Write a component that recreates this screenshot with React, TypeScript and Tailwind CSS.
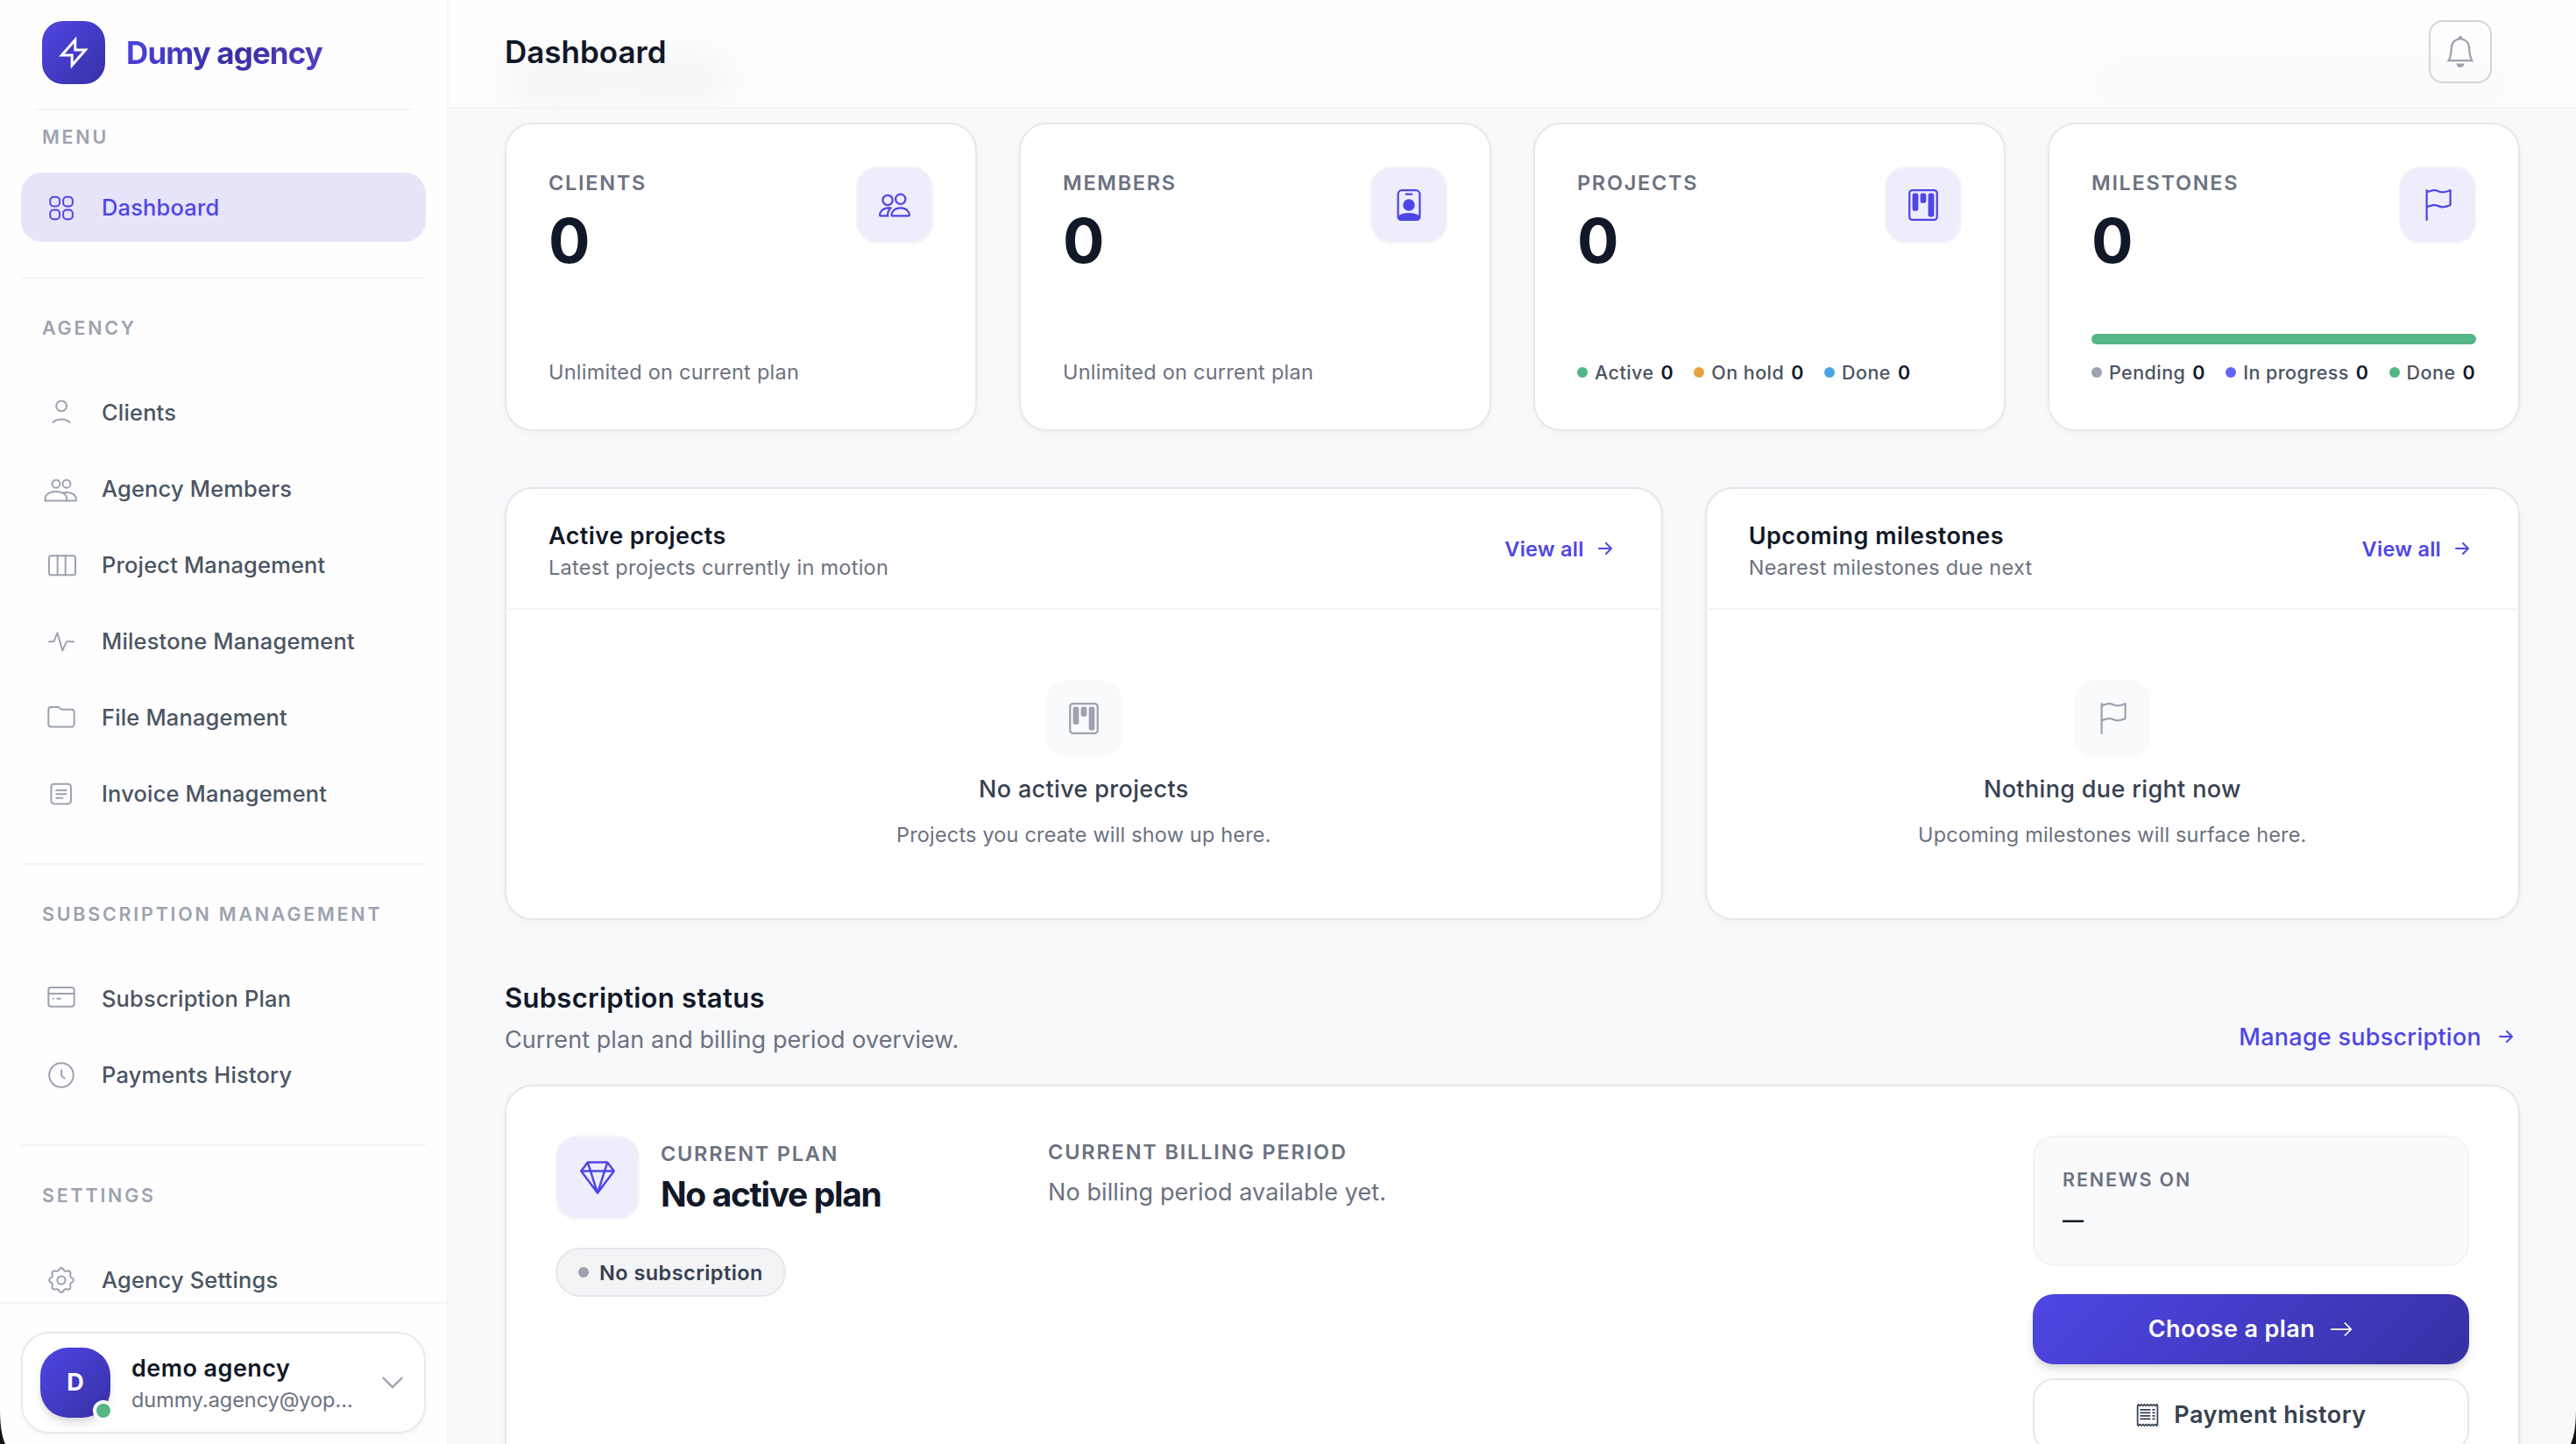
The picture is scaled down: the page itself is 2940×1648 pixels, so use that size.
import type { ReactNode } from 'react'
import type { IconType } from 'react-icons'
import {
  BsArrowRight,
  BsArrowRightShort,
  BsBell,
  BsChevronDown,
  BsFlag,
  BsGem,
  BsKanban,
  BsPeople,
  BsPersonBadge,
  BsReceipt,
} from 'react-icons/bs'

// eight-lobed outline, centred on 20,20
const gearPoints = Array.from({ length: 96 }, (_, i) => {
  const a = (i / 96) * Math.PI * 2
  const r = 12.5 + 1.4 * Math.cos(a * 8)
  return `${(20 + r * Math.cos(a)).toFixed(2)},${(20 + r * Math.sin(a)).toFixed(2)}`
}).join(' ')

const icons: Record<string, ReactNode> = {
  grid: (
    <>
      <rect x="7.3" y="7.7" width="10.8" height="10.8" rx="4" />
      <rect x="22.1" y="7.7" width="10.8" height="10.8" rx="4" />
      <rect x="7.3" y="22.5" width="10.8" height="10.8" rx="4" />
      <rect x="22.1" y="22.5" width="10.8" height="10.8" rx="4" />
    </>
  ),
  user: (
    <>
      <circle cx="20.1" cy="12.4" r="5.9" />
      <path d="M10.4 30.9c5.6-4.7 13.6-4.7 19.2 0" />
    </>
  ),
  users: (
    <>
      <circle cx="14" cy="14.2" r="4.5" />
      <circle cx="26" cy="14.2" r="4.5" />
      <path d="M1.6 33.6V31c0-5 5.8-8 12.3-8s12.3 3 12.3 8v2.6z" />
      <path d="M22.8 24h3.4c6 0 10.6 3 10.6 7.4v2.2H26" />
    </>
  ),
  columns: (
    <>
      <rect x="6" y="9.3" width="30" height="22" rx="2.4" />
      <path d="M15.7 9.3v22M24.7 9.3v22" />
    </>
  ),
  pulse: <path d="M6 20.3h5.3l4.1-10 5.9 20.2 4.6-10.2H34" />,
  folder: (
    <path d="M5.3 11a3 3 0 0 1 3-3h7.6c.8 0 1.5.3 2.1.8l1.3 1.1c.6.5 1.3.8 2.1.8h10.3a3 3 0 0 1 3 3v13.8a3 3 0 0 1-3 3H8.3a3 3 0 0 1-3-3z" />
  ),
  invoice: (
    <>
      <rect x="8.4" y="8.8" width="22.6" height="22.6" rx="3.4" />
      <path d="M14.3 15.9h11.4M14.3 20.3h11.4M14.3 24.8h7" />
    </>
  ),
  card: (
    <>
      <rect x="5.3" y="7" width="29.4" height="21.8" rx="3" />
      <path d="M5.3 13.9h29.4M10.8 19.8h.2M15.3 19.8h3.6" />
    </>
  ),
  clock: (
    <>
      <circle cx="20" cy="20" r="13.8" />
      <path d="M20 14.3v4.9c0 2 1.4 3.2 3.6 4.4" />
    </>
  ),
  gear: (
    <>
      <polygon points={gearPoints} />
      <circle cx="20" cy="20" r="4.6" />
    </>
  ),
}

const sections = [
  { title: 'MENU', items: [{ label: 'Dashboard', icon: 'grid', active: true }] },
  {
    title: 'AGENCY',
    items: [
      { label: 'Clients', icon: 'user' },
      { label: 'Agency Members', icon: 'users' },
      { label: 'Project Management', icon: 'columns' },
      { label: 'Milestone Management', icon: 'pulse' },
      { label: 'File Management', icon: 'folder' },
      { label: 'Invoice Management', icon: 'invoice' },
    ],
  },
  {
    title: 'SUBSCRIPTION MANAGEMENT',
    items: [
      { label: 'Subscription Plan', icon: 'card' },
      { label: 'Payments History', icon: 'clock' },
    ],
  },
  { title: 'SETTINGS', items: [{ label: 'Agency Settings', icon: 'gear' }] },
]

function NavItem({ label, icon, active }: { label: string; icon: string; active?: boolean }) {
  return (
    <a
      href="#"
      className={`flex h-[79px] shrink-0 items-center gap-[26px] rounded-3xl pl-[26px] text-[25.5px] font-medium tracking-[0.15px] ${
        active ? 'bg-[#e6e4f9] text-[#4f46e5]' : 'text-[#4b5563]'
      }`}
    >
      <svg
        viewBox="0 0 40 40"
        fill="none"
        stroke="currentColor"
        strokeWidth="2"
        strokeLinecap="round"
        strokeLinejoin="round"
        className={`h-10 w-10 ${active ? 'text-[#4f46e5]' : 'text-[#9ca3af]'}`}
      >
        {icons[icon]}
      </svg>
      <span className="pt-0.5">{label}</span>
    </a>
  )
}

function Sidebar() {
  return (
    <aside className="flex h-full w-[512px] shrink-0 flex-col border-r-2 border-[#f3f4f6] bg-[#fefefe]">
      <div className="mx-10 flex h-[126px] shrink-0 items-center gap-6 border-b-2 border-[#f3f4f6] pb-1 pl-2">
        <div className="h-[72px] w-[72px] rounded-3xl bg-[linear-gradient(135deg,#4f46e5,#3730a3)]">
          <svg viewBox="0 0 72 72" fill="none" stroke="white" strokeWidth="3" className="h-[72px] w-[72px]">
            <path d="M37.8 21.6v11.3h11.7L34.2 50.4V39.1H22.5z" />
          </svg>
        </div>
        <span className="bg-[linear-gradient(135deg,#4f46e5,#3730a3_55%,#5b3ec2)] bg-clip-text text-[35px] leading-[48px] font-bold tracking-[-0.9px] text-transparent">
          Dumy agency
        </span>
      </div>

      <nav className="flex min-h-0 flex-1 flex-col overflow-hidden px-6">
        {sections.map((s, i) => (
          <div
            key={s.title}
            className={
              i === 0
                ? 'flex shrink-0 flex-col pt-3'
                : 'mt-10 flex shrink-0 flex-col border-t-2 border-[#f3f4f6] pt-[38px]'
            }
          >
            <div
              className={`pl-6 text-[21.5px] leading-9 font-semibold tracking-[2.75px] text-[#9ca3af] ${
                i === 0 ? 'mb-[23px]' : 'mb-[39px]'
              }`}
            >
              {s.title}
            </div>
            <div className="flex flex-col gap-2">
              {s.items.map((item) => (
                <NavItem key={item.label} {...item} />
              ))}
            </div>
          </div>
        ))}
      </nav>

      <div className="h-[162px] shrink-0 border-t-2 border-[#f3f4f6] px-6 pt-8">
        <div className="flex h-[116px] items-center gap-6 rounded-[32px] border-2 border-[#e9eaee] bg-white pr-[22px] pl-5 shadow-[0_2px_6px_rgba(0,0,0,0.04)]">
          <div className="relative flex h-20 w-20 items-center justify-center rounded-[32px] bg-[linear-gradient(135deg,#4f46e5,#3730a3)] text-[27px] font-bold text-white shadow-[0_8px_12px_-2px_rgba(0,0,0,0.12),0_4px_8px_-4px_rgba(0,0,0,0.1)]">
            D
            <span className="absolute -right-1 -bottom-1 h-6 w-6 rounded-full border-4 border-white bg-[#54b586]" />
          </div>
          <div className="min-w-0 flex-1 pt-0.5">
            <div className="text-[27px] leading-[38px] font-semibold tracking-[0.45px] text-[#111827]">demo agency</div>
            <div className="text-[23.5px] leading-[34px] tracking-[-0.06px] text-[#6b7280]">dummy.agency@yop…</div>
          </div>
          <BsChevronDown size={28} strokeWidth={0.5} className="text-[#9ca3af]" />
        </div>
      </div>
    </aside>
  )
}

function Header() {
  return (
    <header className="relative flex h-[124px] shrink-0 items-center justify-between overflow-hidden border-b-2 border-[#f3f4f6] bg-[#fefefe] pr-24 pb-1 pl-16">
      <div className="absolute top-[72px] left-[66px] h-10 w-[120px] rounded-full bg-black/5 blur-[24px]" />
      <div className="absolute top-[70px] left-[190px] h-10 w-[130px] rounded-full bg-black/5 blur-[24px]" />
      <div className="absolute top-[76px] right-20 h-10 w-[470px] rounded-full bg-black/2 blur-[22px]" />
      <h1 className="relative text-[35px] leading-[48px] font-semibold text-[#111827]">Dashboard</h1>
      <button
        type="button"
        aria-label="Notifications"
        className="relative flex h-[72px] w-[72px] items-center justify-center rounded-2xl border-2 border-[#d1d5db] text-[#9ca3af]"
      >
        <BsBell size={36} />
      </button>
    </header>
  )
}

function StatCard({ label, icon: Icon, children }: { label: string; icon: IconType; children: ReactNode }) {
  return (
    <div className="flex h-[352px] flex-col justify-between rounded-[32px] border-2 border-[#e7e8ec] bg-white p-12 shadow-[0_2px_6px_rgba(0,0,0,0.04)]">
      <div className="flex items-start justify-between">
        <div>
          <div className="text-[23.5px] leading-[37px] font-semibold tracking-[1.7px] text-[#6b7280]">{label}</div>
          <div className="mt-3 text-[70.5px] leading-[72px] font-bold text-[#111827]">0</div>
        </div>
        <div className="flex h-[88px] w-[88px] items-center justify-center rounded-3xl border-2 border-[#f3f4f6] bg-[#eeedfb] text-[#4f46e5]">
          <Icon size={36} />
        </div>
      </div>
      <div>{children}</div>
    </div>
  )
}

function Legend({ items }: { items: { label: string; dot: string }[] }) {
  return (
    <div className="flex gap-6 text-[21.5px] leading-[34px] whitespace-nowrap">
      {items.map((it) => (
        <div key={it.label} className="flex items-center gap-2">
          <span className={`h-3 w-3 rounded-full ${it.dot}`} />
          <span className="font-medium tracking-[0.45px] text-[#4b5563]">{it.label}</span>
          <span className="font-semibold tracking-[-0.4px] text-[#111827]">0</span>
        </div>
      ))}
    </div>
  )
}

function Panel({
  title,
  subtitle,
  icon: Icon,
  emptyTitle,
  emptyText,
  className,
}: {
  title: string
  subtitle: string
  icon: IconType
  emptyTitle: string
  emptyText: string
  className: string
}) {
  return (
    <section
      className={`h-[494px] rounded-[32px] border-2 border-[#e7e8ec] bg-white shadow-[0_2px_6px_rgba(0,0,0,0.04)] ${className}`}
    >
      <div className="flex h-[138px] items-center justify-between border-b-2 border-[#f3f4f6] px-12">
        <div className="pt-1.5">
          <h2 className="text-[27px] leading-[38px] font-semibold tracking-[0.45px] text-[#111827]">{title}</h2>
          <p className="-mt-px text-[23.5px] leading-9 tracking-[0.27px] text-[#6b7280]">{subtitle}</p>
        </div>
        <a href="#" className="flex items-center gap-2 text-[23.5px] font-semibold tracking-[0.27px] text-[#4f46e5]">
          <span className="pt-0.5">View all</span>
          <BsArrowRightShort size={32} />
        </a>
      </div>
      <div className="flex flex-col items-center pt-20">
        <div className="flex h-[88px] w-[88px] items-center justify-center rounded-3xl bg-[#f9fafb] text-[#9ca3af]">
          <Icon size={36} />
        </div>
        <div className="mt-4 text-[27px] leading-[42px] font-medium tracking-[0.34px] text-[#374151]">{emptyTitle}</div>
        <p className="mt-[13px] text-[23.5px] leading-9 tracking-[0.17px] text-[#6b7280]">{emptyText}</p>
      </div>
    </section>
  )
}

function SubscriptionCard() {
  return (
    <div className="mt-[30px] flex h-[560px] shrink-0 items-start rounded-[32px] border-2 border-[#e7e8ec] bg-white p-14 shadow-[0_2px_6px_rgba(0,0,0,0.04)]">
      <div className="w-[562px]">
        <div className="flex items-center gap-6">
          <div className="flex h-24 w-24 items-center justify-center rounded-3xl border-2 border-[#f3f4f6] bg-[#eeedfb] text-[#4f46e5]">
            <BsGem size={40} />
          </div>
          <div className="pb-1">
            <div className="text-[23.5px] leading-[42px] font-semibold tracking-[1.75px] text-[#6b7280]">
              CURRENT PLAN
            </div>
            <div className="text-[39px] leading-[50px] font-bold tracking-[-1.37px] text-[#111827]">No active plan</div>
          </div>
        </div>
        <div className="mt-8 inline-flex h-14 items-center gap-3 rounded-full border-2 border-[#e5e7eb] bg-[#f3f4f6] px-6 text-[23.5px] font-semibold tracking-[0.45px] text-[#374151]">
          <span className="h-3 w-3 rounded-full bg-[#9ca3af]" />
          <span className="pt-px">No subscription</span>
        </div>
      </div>

      <div className="flex-1">
        <div className="text-[23.5px] leading-[37px] font-semibold tracking-[1.83px] text-[#6b7280]">
          CURRENT BILLING PERIOD
        </div>
        <p className="mt-1.5 text-[27px] leading-[44px] tracking-[0.09px] text-[#6b7280]">
          No billing period available yet.
        </p>
      </div>

      <div className="flex w-[498px] flex-col">
        <div className="h-[149px] rounded-3xl border-2 border-[#f3f4f6] bg-[#f9fafb] px-8 pt-8">
          <div className="text-[21.5px] leading-8 font-semibold tracking-[1.85px] text-[#6b7280]">RENEWS ON</div>
          <div className="mt-2.5 text-[24px] leading-[42px] font-semibold text-[#111827]">—</div>
        </div>
        <button
          type="button"
          className="mt-8 flex h-20 items-center justify-center gap-4 rounded-3xl bg-[linear-gradient(135deg,#4f46e5,#3730a3)] text-[27px] font-semibold tracking-[0.4px] text-white shadow-[0_8px_12px_-2px_rgba(0,0,0,0.12),0_4px_8px_-4px_rgba(0,0,0,0.1)]"
        >
          <span className="pt-px">Choose a plan</span>
          <BsArrowRight size={28} />
        </button>
        <button
          type="button"
          className="mt-4 flex h-[84px] items-center justify-center gap-4 rounded-3xl border-2 border-[#e5e7eb] bg-white text-[27px] font-semibold tracking-[0.46px] text-[#374151]"
        >
          <BsReceipt size={28} />
          <span className="pt-px">Payment history</span>
        </button>
      </div>
    </div>
  )
}

export default function App() {
  return (
    <div className="relative flex h-[1648px] w-[2940px] overflow-hidden bg-[#f8f9fb] font-['Inter',sans-serif]">
      <Sidebar />
      <div className="flex min-w-0 flex-1 flex-col">
        <Header />
        <main className="flex min-h-0 flex-1 flex-col overflow-hidden px-16 pt-4">
          <div className="grid shrink-0 grid-cols-4 gap-12">
            <StatCard label="CLIENTS" icon={BsPeople}>
              <p className="text-[23.5px] leading-[35px] tracking-[0.25px] text-[#6b7280]">Unlimited on current plan</p>
            </StatCard>
            <StatCard label="MEMBERS" icon={BsPersonBadge}>
              <p className="text-[23.5px] leading-[35px] tracking-[0.25px] text-[#6b7280]">Unlimited on current plan</p>
            </StatCard>
            <StatCard label="PROJECTS" icon={BsKanban}>
              <Legend
                items={[
                  { label: 'Active', dot: 'bg-[#54b586]' },
                  { label: 'On hold', dot: 'bg-[#e8a23f]' },
                  { label: 'Done', dot: 'bg-[#4aa3e5]' },
                ]}
              />
            </StatCard>
            <StatCard label="MILESTONES" icon={BsFlag}>
              <div className="mb-[15px] h-3 rounded-full bg-[#54b586]" />
              <Legend
                items={[
                  { label: 'Pending', dot: 'bg-[#9ca3af]' },
                  { label: 'In progress', dot: 'bg-[#6366f1]' },
                  { label: 'Done', dot: 'bg-[#54b586]' },
                ]}
              />
            </StatCard>
          </div>

          <div className="mt-16 grid shrink-0 grid-cols-12 gap-12">
            <Panel
              className="col-span-7"
              title="Active projects"
              subtitle="Latest projects currently in motion"
              icon={BsKanban}
              emptyTitle="No active projects"
              emptyText="Projects you create will show up here."
            />
            <Panel
              className="col-span-5"
              title="Upcoming milestones"
              subtitle="Nearest milestones due next"
              icon={BsFlag}
              emptyTitle="Nothing due right now"
              emptyText="Upcoming milestones will surface here."
            />
          </div>

          <div className="mt-16 flex shrink-0 items-end justify-between">
            <div>
              <h2 className="text-[31px] leading-[50px] font-semibold tracking-[0.29px] text-[#111827]">
                Subscription status
              </h2>
              <p className="pt-px text-[27px] leading-[43px] tracking-[0.08px] text-[#6b7280]">
                Current plan and billing period overview.
              </p>
            </div>
            <a
              href="#"
              className="mb-1 flex items-center gap-3 text-[27px] leading-[44px] font-medium tracking-[0.26px] text-[#4f46e5]"
            >
              <span className="-mb-0.5">Manage subscription</span>
              <BsArrowRightShort size={32} />
            </a>
          </div>
          <SubscriptionCard />
        </main>
      </div>

      {/* rounded window corners */}
      <svg viewBox="0 0 6 40" className="absolute bottom-0 left-0 h-10 w-1.5">
        <path d="M0 0C0 16 1.5 30 6 40H0z" fill="#111" />
      </svg>
      <svg viewBox="0 0 6 40" className="absolute right-0 bottom-0 h-10 w-1.5">
        <path d="M6 0C6 16 4.5 30 0 40h6z" fill="#111" />
      </svg>
    </div>
  )
}
